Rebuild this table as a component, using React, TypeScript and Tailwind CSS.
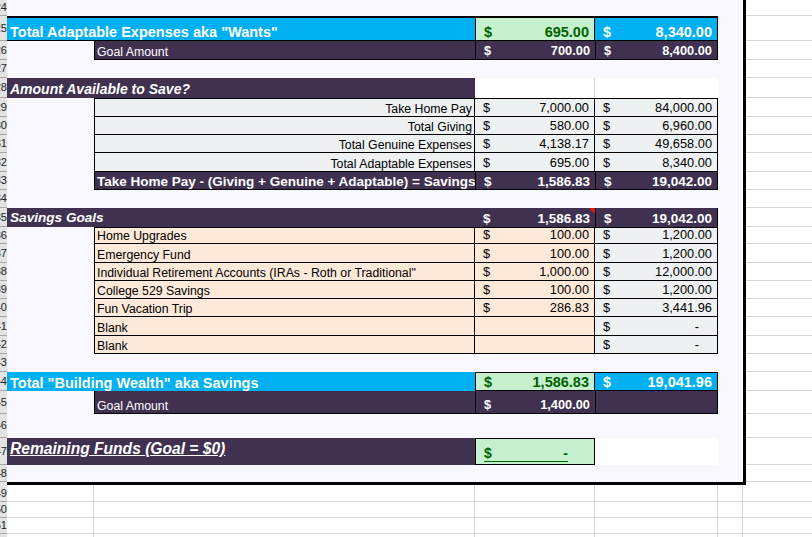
import type { ReactNode } from 'react';

const cols = 'grid grid-cols-[7px_87px_381px_120px_123px_25px_3px_1fr]';

const totals = [
  { label: 'Take Home Pay',            d: '7,000.00', e: '84,000.00', n: 29, h: 'h-[19px]', top: 'border-t' },
  { label: 'Total Giving',             d: '580.00',   e: '6,960.00',  n: 30, h: 'h-[18px]', top: '' },
  { label: 'Total Genuine Expenses',   d: '4,138.17', e: '49,658.00', n: 31, h: 'h-[18px]', top: '' },
  { label: 'Total Adaptable Expenses', d: '695.00',   e: '8,340.00',  n: 32, h: 'h-[19px]', top: '' },
];

const goals = [
  { label: 'Home Upgrades',  d: '100.00', e: '1,200.00', n: 36, h: 'h-[17px]', top: 'border-t' },
  { label: 'Emergency Fund', d: '100.00', e: '1,200.00', n: 37, h: 'h-[19px]', top: '' },
  { label: 'Individual Retirement Accounts (IRAs - Roth or Traditional"', d: '1,000.00', e: '12,000.00', n: 38, h: 'h-[18px]', top: '' },
  { label: 'College 529 Savings', d: '100.00', e: '1,200.00', n: 39, h: 'h-[18px]', top: '' },
  { label: 'Fun Vacation Trip',   d: '286.83', e: '3,441.96', n: 40, h: 'h-[18px]', top: '' },
  { label: 'Blank', d: '', e: '-', n: 41, h: 'h-[19px]', top: '' },
  { label: 'Blank', d: '', e: '-', n: 42, h: 'h-[18px]', top: '' },
];

const below = [
  { n: 49, h: 'h-[17px]' },
  { n: 50, h: 'h-[16px]' },
  { n: 51, h: 'h-[16px]' },
  { n: 52, h: 'h-[16px]' },
];

function Hdr({ n }: { n: number }) {
  return (
    <div className="flex items-center justify-end overflow-hidden bg-[#e3e3e3] border-b border-[#a8a8a8] text-[11px] leading-none text-[#222]">
      <span className="shrink-0 whitespace-nowrap">{n}</span>
    </div>
  );
}

// one sheet row: children fill columns B..E
function Row({ n, h, children }: { n: number; h: string; children?: ReactNode }) {
  return (
    <div className={`${cols} ${h}`}>
      <Hdr n={n} />
      {children ?? <div className="col-span-4 bg-[#f8f8fe]" />}
      <div className="bg-[#f8f8fe]" />
      <div className="bg-black" />
      <div className="bg-white border-b border-[#d6d6d6]" />
    </div>
  );
}

function Money({ v, cls, children }: { v?: string; cls: string; children?: ReactNode }) {
  return (
    <div className={`flex justify-between pl-[8px] ${cls}`}>
      <span>$</span>
      <span>{v}</span>
      {children}
    </div>
  );
}

export default function App() {
  return (
    <div className="w-[812px] h-[537px] overflow-hidden bg-white font-['Liberation_Sans',Arial,sans-serif] leading-none text-black">

      <Row n={24} h="h-[16px]" />

      <Row n={25} h="h-[25px]">
        <div className="col-span-2 flex items-end pb-[1px] pl-[3px] bg-[#00b0f0] border-t-2 border-b border-black text-[14.5px] font-bold text-white whitespace-nowrap">
          Total Adaptable Expenses aka &quot;Wants&quot;
        </div>
        <Money v="695.00" cls="items-end pb-[1px] pr-[5px] bg-[#c6efce] border-t-2 border-b border-x border-black text-[14.5px] font-bold text-[#006100]" />
        <Money v="8,340.00" cls="items-end pb-[1px] pr-[5px] bg-[#00b0f0] border-t-2 border-b border-r border-black text-[14.5px] font-bold text-white" />
      </Row>

      <Row n={26} h="h-[19px]">
        <div className="bg-[#f8f8fe]" />
        <div className="flex items-end pb-[1px] pl-[2px] bg-[#403151] border-l border-b border-black text-[12.3px] text-white">Goal Amount</div>
        <Money v="700.00" cls="items-end pb-[1px] pr-[5px] bg-[#403151] border-l border-b border-black text-[12.8px] font-bold text-white" />
        <Money v="8,400.00" cls="items-end pb-[1px] pr-[5px] bg-[#403151] border-x border-b border-black text-[12.8px] font-bold text-white" />
      </Row>

      <Row n={27} h="h-[18px]" />

      <Row n={28} h="h-[20px]">
        <div className="col-span-2 flex items-end pb-[2px] pl-[3px] bg-[#403151] text-[14px] font-bold italic text-white">Amount Available to Save?</div>
        <div className="bg-white border-r border-[#d6d6d6]" />
        <div className="bg-white" />
      </Row>

      {totals.map((t) => (
        <Row key={t.n} n={t.n} h={t.h}>
          <div className="bg-[#f8f8fe]" />
          <div className={`flex items-end pb-[1px] justify-end pr-[2px] bg-[#eef1f1] border-x border-b border-black text-[12.3px] ${t.top}`}>{t.label}</div>
          <Money v={t.d} cls={`items-end pb-[1px] pr-[5px] bg-[#eef1f1] border-r border-b border-black text-[12.8px] ${t.top}`} />
          <Money v={t.e} cls={`items-end pb-[1px] pr-[5px] bg-[#eef1f1] border-r border-b border-black text-[12.8px] ${t.top}`} />
        </Row>
      ))}

      <Row n={33} h="h-[18px]">
        <div className="bg-[#f8f8fe]" />
        <div className="flex items-end pb-[1px] pl-[2px] bg-[#403151] border-l border-b border-black text-[13.5px] font-bold text-white whitespace-nowrap overflow-hidden">
          Take Home Pay - (Giving + Genuine + Adaptable) = Savings
        </div>
        <Money v="1,586.83" cls="items-end pb-[1px] pr-[5px] bg-[#403151] border-l border-b border-black text-[13.5px] font-bold text-white" />
        <Money v="19,042.00" cls="items-end pb-[1px] pr-[5px] bg-[#403151] border-x border-b border-black text-[13.5px] font-bold text-white" />
      </Row>

      <Row n={34} h="h-[18px]" />

      <Row n={35} h="h-[19px]">
        <div className="col-span-2 flex items-end pb-[2px] pl-[3px] bg-[#403151] text-[13.6px] font-bold italic text-white">Savings Goals</div>
        <Money v="1,586.83" cls="relative items-end pb-[2px] pr-[5px] bg-[#403151] text-[13.5px] font-bold text-white">
          <span className="absolute right-0 top-0 w-0 h-0 border-t-[6px] border-l-[6px] border-t-[#e81010] border-l-transparent" />
        </Money>
        <Money v="19,042.00" cls="items-end pb-[2px] pr-[5px] bg-[#403151] border-l border-r border-black text-[13.5px] font-bold text-white" />
      </Row>

      {goals.map((g) => (
        <Row key={g.n} n={g.n} h={g.h}>
          <div className="bg-[#f8f8fe]" />
          <div className={`flex items-end pb-[1px] pl-[2px] bg-[#fde9d9] border-x border-b border-black text-[12.3px] whitespace-nowrap ${g.top}`}>{g.label}</div>
          {g.d ? (
            <Money v={g.d} cls={`items-end pb-[1px] pr-[5px] bg-[#fde9d9] border-r border-b border-black text-[12.8px] ${g.top}`} />
          ) : (
            <div className="bg-[#fde9d9] border-r border-b border-black" />
          )}
          <Money
            v={g.e}
            cls={`items-end pb-[1px] bg-[#eef1f1] border-r border-b border-black text-[12.8px] ${g.e === '-' ? 'pr-[18px]' : 'pr-[5px]'} ${g.top}`}
          />
        </Row>
      ))}

      <Row n={43} h="h-[18px]" />

      <Row n={44} h="h-[19px]">
        <div className="col-span-2 flex items-end pb-[1px] pl-[3px] bg-[#00b0f0] text-[14.5px] font-bold text-white whitespace-nowrap">
          Total &quot;Building Wealth&quot; aka Savings
        </div>
        <Money v="1,586.83" cls="items-end pb-[1px] pr-[5px] bg-[#c6efce] border border-black text-[14.5px] font-bold text-[#006100]" />
        <Money v="19,041.96" cls="items-end pb-[1px] pr-[5px] bg-[#00b0f0] border-t border-r border-b border-black text-[14.5px] font-bold text-white" />
      </Row>

      <Row n={45} h="h-[23px]">
        <div className="bg-[#f8f8fe]" />
        <div className="flex items-end pb-[1px] pl-[2px] bg-[#403151] border-l border-b border-black text-[12.3px] text-white">Goal Amount</div>
        <Money v="1,400.00" cls="items-end pb-[1px] pr-[5px] bg-[#403151] border-l border-b border-black text-[12.8px] font-bold text-white" />
        <div className="bg-[#403151] border-x border-b border-black" />
      </Row>

      <Row n={46} h="h-[24px]" />

      <Row n={47} h="h-[27px]">
        <div className="col-span-2 flex items-start pt-[3px] pl-[3px] bg-[#403151] text-[15.6px] font-bold italic underline text-white whitespace-nowrap">
          Remaining Funds (Goal = $0)
        </div>
        <div className="flex items-end pb-[2px] pl-[8px] pr-[26px] bg-[#c6efce] border border-black text-[14px] font-bold text-[#006100]">
          <div className="flex flex-1 justify-between border-b border-[#006100] pb-[1px]">
            <span>$</span>
            <span>-</span>
          </div>
        </div>
        <div className="bg-white" />
      </Row>

      <Row n={48} h="h-[17px]" />

      <div className={`${cols} h-[3px]`}>
        <div className="bg-[#e3e3e3]" />
        <div className="col-span-6 bg-black" />
        <div className="bg-white" />
      </div>

      {below.map((b) => (
        <div key={b.n} className={`${cols} ${b.h}`}>
          <Hdr n={b.n} />
          <div className="bg-white border-r border-b border-[#d6d6d6]" />
          <div className="bg-white border-r border-b border-[#d6d6d6]" />
          <div className="bg-white border-r border-b border-[#d6d6d6]" />
          <div className="bg-white border-r border-b border-[#d6d6d6]" />
          <div className="bg-white border-r border-b border-[#d6d6d6]" />
          <div className="bg-white border-b border-[#d6d6d6]" />
          <div className="bg-white border-b border-[#d6d6d6]" />
        </div>
      ))}

    </div>
  );
}
